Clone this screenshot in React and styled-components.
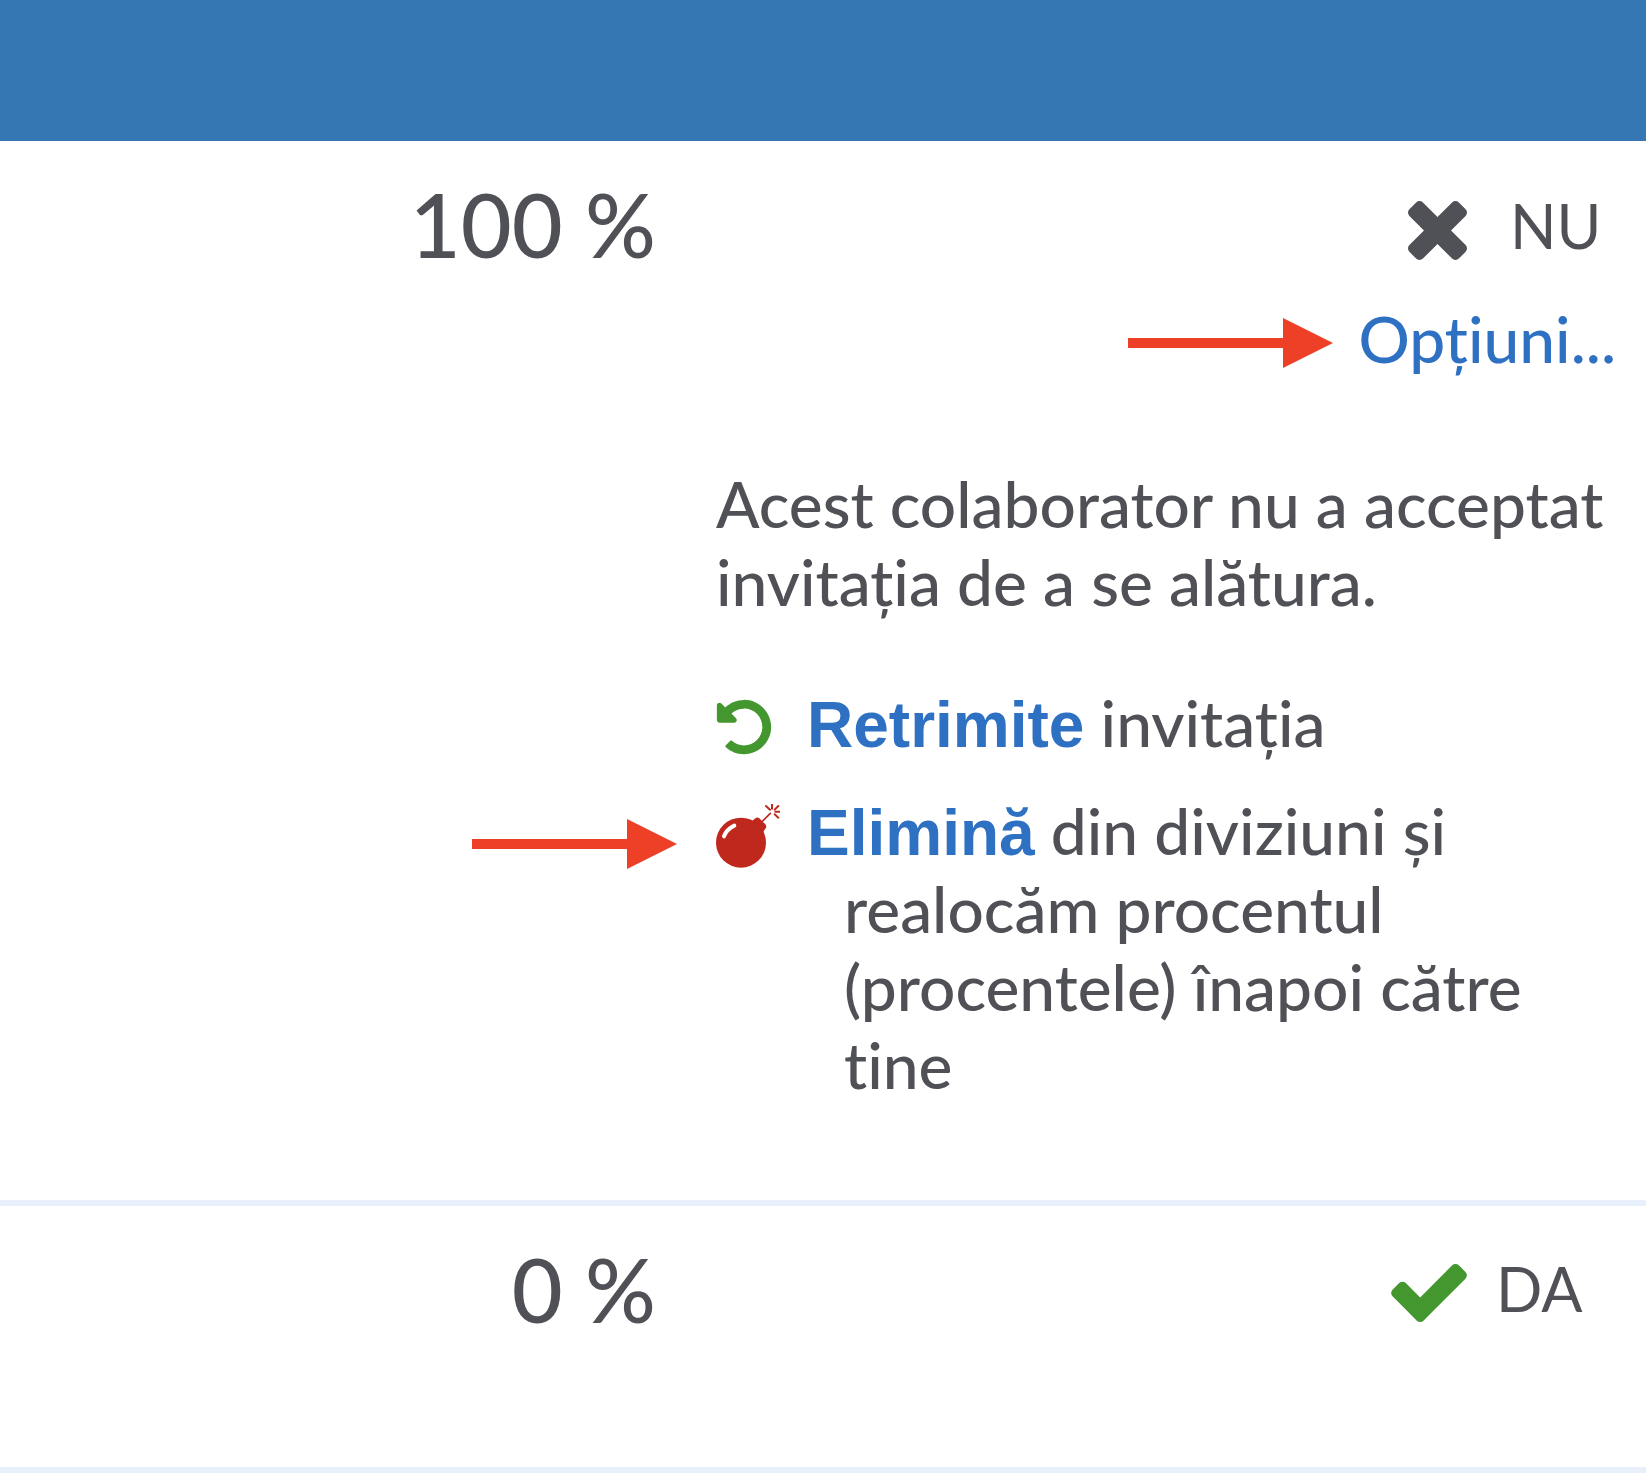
import React from 'react'
import styled, { createGlobalStyle } from 'styled-components'
import { FaUndoAlt } from 'react-icons/fa'

const GlobalStyle = createGlobalStyle`
  body {
    margin: 0;
    background: #fff;
    color: #505156;
    font-family: Lato, "Liberation Sans", sans-serif;
    font-size: 64px;
    font-weight: 500;
    font-variant-ligatures: none;
    line-height: 78px;
  }
`

const Table = styled.table`
  width: calc(100% - 4px);
  border-collapse: separate;
  border-spacing: 0;
  table-layout: fixed;
`
const HeadCell = styled.th`
  height: 141px;
  padding: 0;
  background: #3577b3;
  width: ${props => props.$width || 'auto'};
`
const Cell = styled.td`
  padding: 0;
  vertical-align: top;
  border-bottom: 6px solid #e8f1fb;
`
const ShareCell = styled(Cell)`
  padding: 30px 28px 0 0;
  font-size: 88px;
  line-height: 106px;
  text-align: right;
`
const StatusCell = styled(Cell)`
  padding: ${props => props.$open ? '46px 30px 96px 32px' : '44px 30px 139px 32px'};
`
const Status = styled.div`
  display: flex;
  justify-content: flex-end;
  align-items: center;
  font-size: 61px;
  font-weight: 400;

  svg {
    margin-top: 8px;
  }
`
const StatusLabel = styled.span`
  box-sizing: border-box;
  width: 149px;
  padding-left: ${props => props.$indent}px;
`
const OptionsRow = styled.div`
  display: flex;
  justify-content: flex-end;
  align-items: center;
  gap: 24px;
  margin-top: 35px;

  svg {
    margin-top: 8px;
  }
`
const Link = styled.a`
  color: #2e70c2;
  text-decoration: none;
`
const ActionLink = styled(Link)`
  font-family: "Liberation Sans", sans-serif;
  font-weight: 700;
  line-height: 1;
`
const Note = styled.p`
  margin: 87px 0 63px;
`
const Actions = styled.ul`
  display: flex;
  flex-direction: column;
  gap: 30px;
  margin: 0;
  padding: 0;
  list-style: none;
`
const Action = styled.li`
  position: relative;
  display: flex;
`
const ActionIcon = styled.span`
  display: flex;
  flex: 0 0 91px;
  height: 78px;
  padding-top: ${props => props.$top}px;
  box-sizing: border-box;
  color: ${props => props.$color};
`
const ActionText = styled.div`
  max-width: 740px;
  padding-left: 37px;
  text-indent: -37px;
`
const ActionArrow = styled.span`
  position: absolute;
  left: -244px;
  top: 27px;
  display: flex;
`

function Arrow() {
  return (
    <svg width="206" height="50" viewBox="0 0 206 50" fill="#ed4026" aria-hidden="true">
      <path d="M0 20h155V0l50 25-50 25V30H0z" />
    </svg>
  )
}

function Cross() {
  return (
    <svg width="59" height="59" viewBox="302 366 1188 1188" fill="#505156" aria-hidden="true">
      <path d="M1490 1322q0 40-28 68l-136 136q-28 28-68 28t-68-28l-294-294-294 294q-28 28-68 28t-68-28l-136-136q-28-28-28-68t28-68l294-294-294-294q-28-28-28-68t28-68l136-136q28-28 68-28t68 28l294 294 294-294q28-28 68-28t68 28l136 136q28 28 28 68t-28 68l-294 294 294 294q28 28 28 68z" />
    </svg>
  )
}

function Check() {
  return (
    <svg width="76" height="58" viewBox="121 334 1550 1188" fill="#43972e" aria-hidden="true">
      <path d="M1671 566q0 40-28 68l-724 724-136 136q-28 28-68 28t-68-28l-136-136-362-362q-28-28-28-68t28-68l136-136q28-28 68-28t68 28l294 295 656-657q28-28 68-28t68 28l136 136q28 28 28 68z" />
    </svg>
  )
}

function Bomb() {
  return (
    <svg width="64" height="64" viewBox="0 0 192 192" fill="currentColor" aria-hidden="true">
      <circle cx="75" cy="116" r="75" />
      <path d="M109 50l9-7q6-5 12 0l18 18q5 6 1 12l-8 12z" />
      <g fill="none" stroke="currentColor" strokeLinecap="round">
        <path d="M137 54l26-26" strokeWidth="5" />
        <path d="M150 6l12 11M168 2v12M187 6l-11 11M178 23h12M176 31l11 10" strokeWidth="6" />
      </g>
      <path d="M24 97q8-21 31-32" fill="none" stroke="#fff" strokeWidth="12" strokeLinecap="round" />
    </svg>
  )
}

export default function App() {
  return (
    <>
      <GlobalStyle />
      <Table>
        <thead>
          <tr>
            <HeadCell />
            <HeadCell $width="962px" />
          </tr>
        </thead>
        <tbody>
          <tr>
            <ShareCell>100 %</ShareCell>
            <StatusCell $open>
              <Status>
                <Cross />
                <StatusLabel $indent={ 43 }>NU</StatusLabel>
              </Status>
              <OptionsRow>
                <Arrow />
                <Link href="#optiuni">Opțiuni...</Link>
              </OptionsRow>
              <Note>Acest colaborator nu a acceptat invitația de a se alătura.</Note>
              <Actions>
                <Action>
                  <ActionIcon $color="#43972e" $top={ 15 }><FaUndoAlt size={ 56 } /></ActionIcon>
                  <ActionText>
                    <ActionLink href="#retrimite">Retrimite</ActionLink> invitația
                  </ActionText>
                </Action>
                <Action>
                  <ActionArrow><Arrow /></ActionArrow>
                  <ActionIcon $color="#bf281d" $top={ 12 }><Bomb /></ActionIcon>
                  <ActionText>
                    <ActionLink href="#elimina">Elimină</ActionLink> din diviziuni și realocăm procentul (procentele) înapoi către tine
                  </ActionText>
                </Action>
              </Actions>
            </StatusCell>
          </tr>
          <tr>
            <ShareCell>0 %</ShareCell>
            <StatusCell>
              <Status>
                <Check />
                <StatusLabel $indent={ 29 }>DA</StatusLabel>
              </Status>
            </StatusCell>
          </tr>
        </tbody>
      </Table>
    </>
  )
}
